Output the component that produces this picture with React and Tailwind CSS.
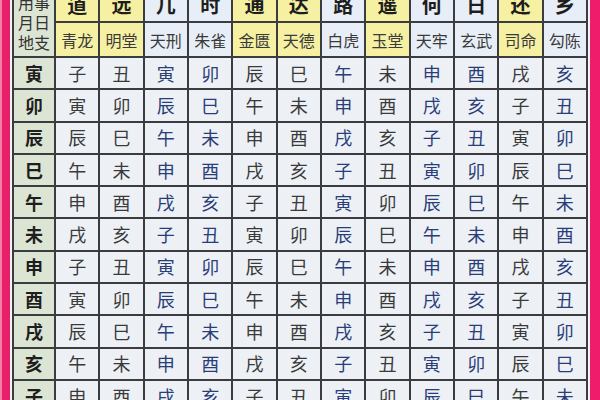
const BRANCHES = ['子', '丑', '寅', '卯', '辰', '巳', '午', '未', '申', '酉', '戌', '亥']
const MONTHS = ['寅', '卯', '辰', '巳', '午', '未', '申', '酉', '戌', '亥', '子']
const SONG = ['道', '远', '几', '时', '通', '达', '路', '遥', '何', '日', '还', '乡']
const GODS = [
    { name: '青龙', good: true },
    { name: '明堂', good: true },
    { name: '天刑', good: false },
    { name: '朱雀', good: false },
    { name: '金匮', good: true },
    { name: '天德', good: true },
    { name: '白虎', good: false },
    { name: '玉堂', good: true },
    { name: '天牢', good: false },
    { name: '玄武', good: false },
    { name: '司命', good: true },
    { name: '勾陈', good: false },
]

const font = { fontFamily: '"Noto Sans CJK SC", "Noto Sans", sans-serif' }

const App = () => {
    return (
        <div className="w-[600px] h-[400px] overflow-hidden bg-[#f4f4f6] flex" style={font}>
            <div className="w-[10px] h-full bg-[#e8206a] border-l-[2px] border-[#f27fa5]" />
            <div className="flex-1 px-[2px]">
                <div className="-mt-[14px] grid grid-cols-[40px_repeat(12,1fr)] grid-rows-[33px_33px_repeat(11,30.3px)] gap-[2px] p-[2px] bg-[#3a3c40]">
                    <div className="row-span-2 bg-[#dce5d4] flex flex-col items-center justify-center text-[16px] leading-[20px] text-[#333]">
                        <span>用事</span>
                        <span>月日</span>
                        <span>地支</span>
                    </div>
                    {SONG.map((c, i) => (
                        <div key={c + i} className={`${GODS[i].good ? 'bg-[#f6f1a2]' : 'bg-[#e8eef7]'} flex items-center justify-center text-[20px] font-bold text-[#1e1e1e]`}>
                            {c}
                        </div>
                    ))}
                    {GODS.map((g) => (
                        <div key={g.name} className={`${g.good ? 'bg-[#f6f1a2]' : 'bg-[#e8eef7]'} flex items-center justify-center text-[16px] text-[#3a3a3a]`}>
                            {g.name}
                        </div>
                    ))}
                    {MONTHS.map((m, r) => (
                        <>
                            <div key={'m' + r} className="bg-[#dce5d4] flex items-center justify-center text-[18px] font-bold text-[#1e1e1e]">
                                {m}
                            </div>
                            {GODS.map((g, j) => (
                                <div key={r + '-' + j} className={`bg-[#edf1f6] flex items-center justify-center text-[18px] ${g.good ? 'text-[#3a3a3a]' : 'text-[#2a3d78]'}`}>
                                    {BRANCHES[(2 * r + j) % 12]}
                                </div>
                            ))}
                        </>
                    ))}
                </div>
            </div>
            <div className="w-[10px] h-full bg-[#ee1c6b]" />
        </div>
    )
}

export default App
